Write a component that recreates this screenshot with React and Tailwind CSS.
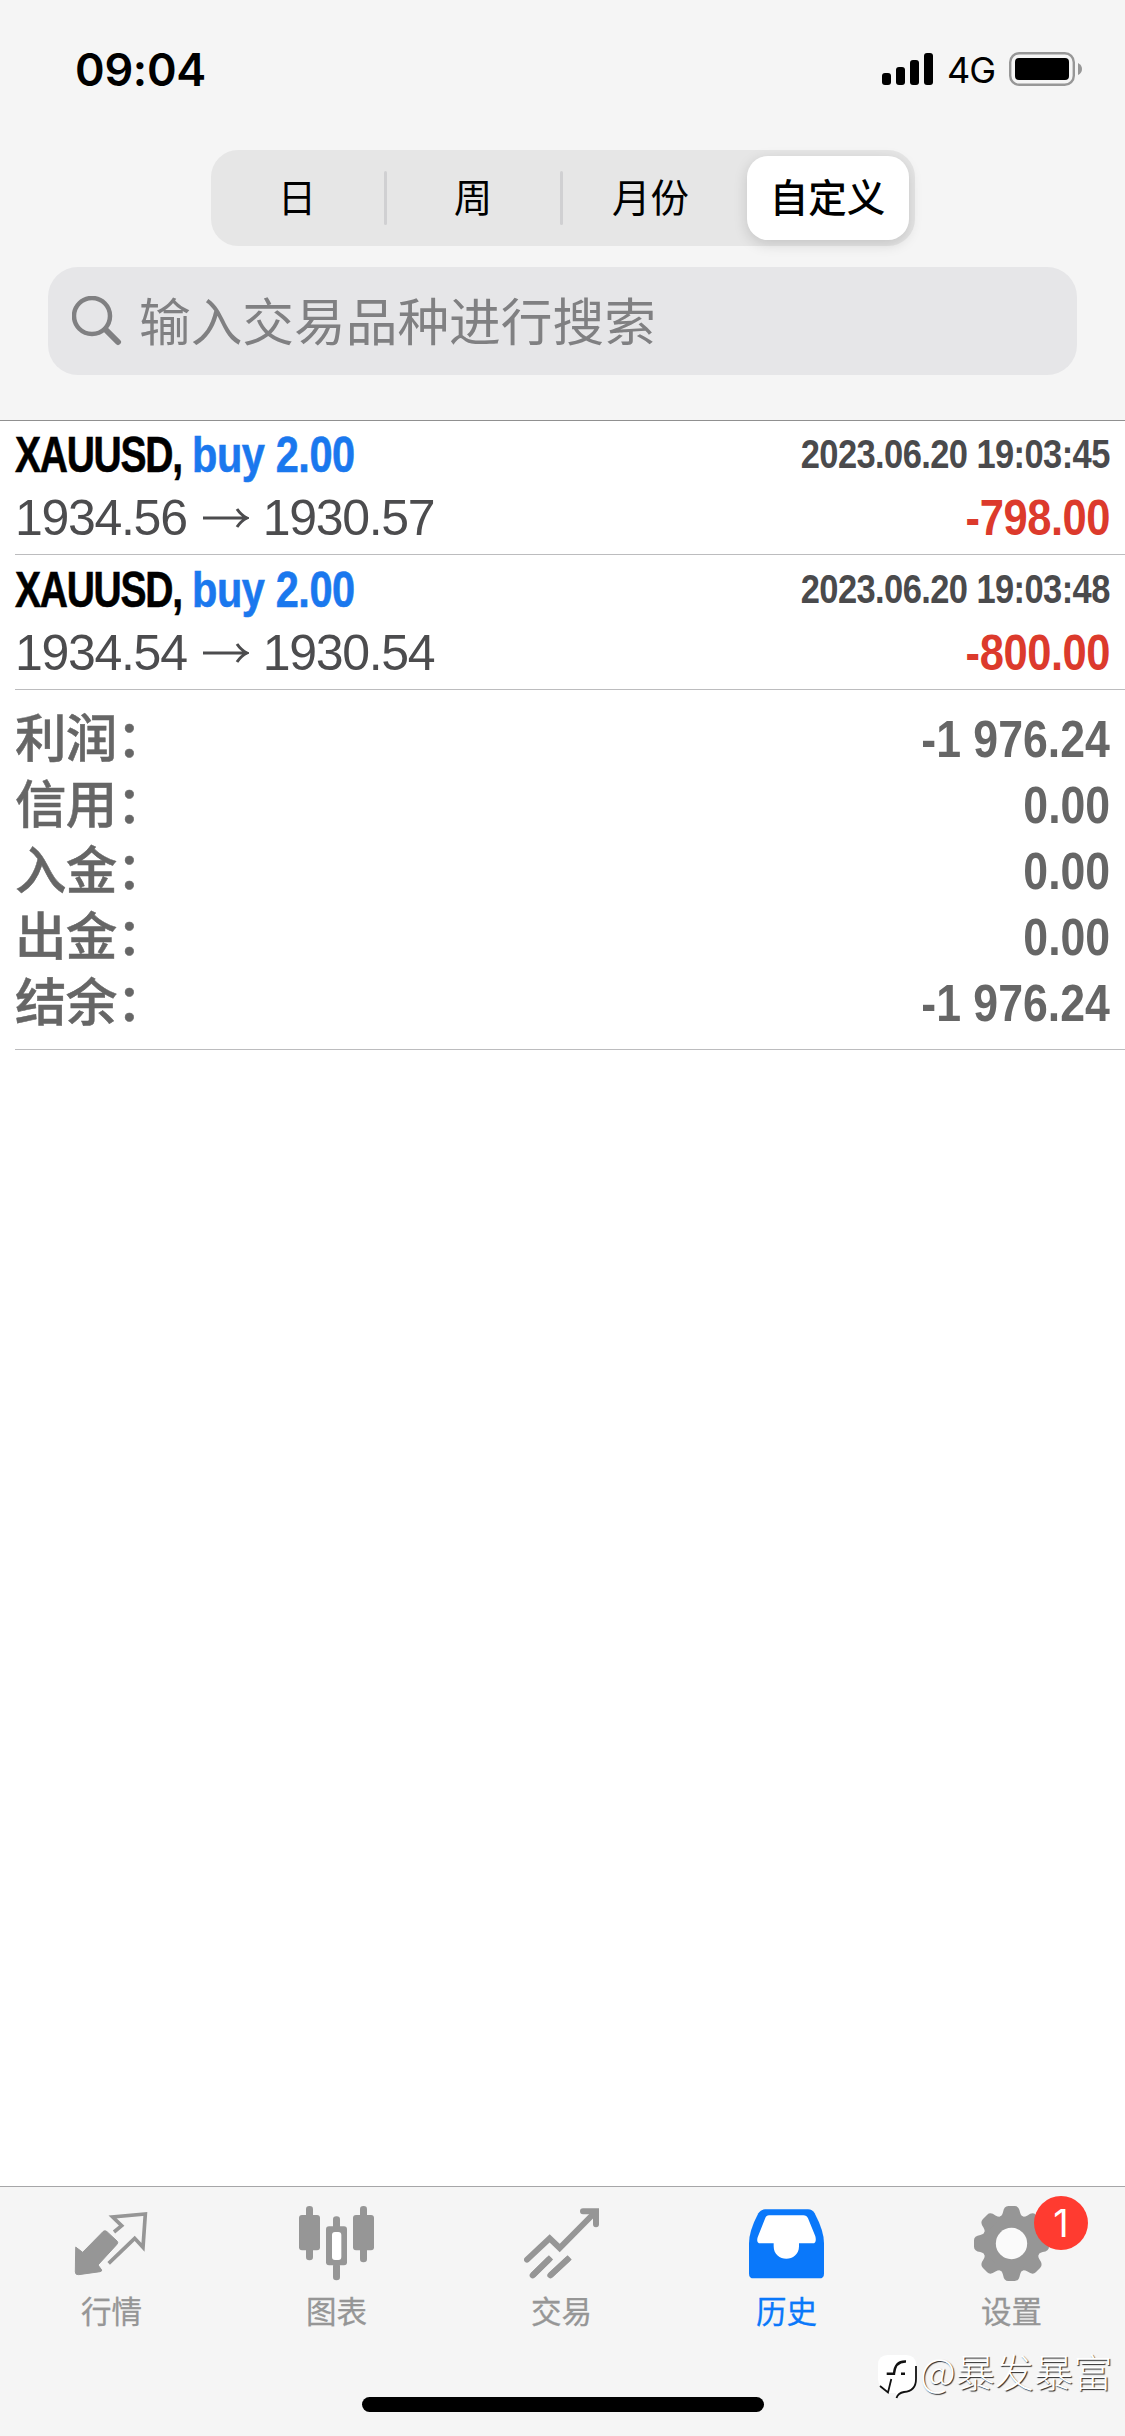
const periods = ['日', '周', '月份', '自定义'];

const deals = [
  { symbol: 'XAUUSD', side: 'buy 2.00', time: '2023.06.20 19:03:45', open: '1934.56', close: '1930.57', profit: '-798.00' },
  { symbol: 'XAUUSD', side: 'buy 2.00', time: '2023.06.20 19:03:48', open: '1934.54', close: '1930.54', profit: '-800.00' }
];

const summary = [
  { label: '利润：', value: '-1 976.24' },
  { label: '信用：', value: '0.00' },
  { label: '入金：', value: '0.00' },
  { label: '出金：', value: '0.00' },
  { label: '结余：', value: '-1 976.24' }
];

const QuotesIcon = () => (
  <svg viewBox="0 0 225 225" className="size-[75px]" strokeLinejoin="round" strokeLinecap="round">
    <path
      d="M6 124 L26 139 L83 81 Q91 70 99 77 L129 105 Q134 110 128 116 L72 177 L83 192 Q84 196 78 197 L14 206 Q4 207 4 199 Z"
      fill="currentColor"
      stroke="currentColor"
      strokeWidth="3"
    />
    <path
      d="M120 78 L143 59 L116 33 L214 24 L207 124 L182 97 L104 172"
      fill="none"
      stroke="currentColor"
      strokeWidth="11"
      strokeLinejoin="miter"
      strokeLinecap="butt"
    />
  </svg>
);

const ChartIcon = () => (
  <svg viewBox="0 0 225 225" className="size-[75px]" fill="currentColor">
    <rect x="21" y="0" width="21" height="163" rx="10" />
    <rect x="0" y="27" width="63" height="106" rx="9" />
    <rect x="183" y="0" width="21" height="169" rx="10" />
    <rect x="162" y="27" width="63" height="106" rx="9" />
    <rect x="102" y="31" width="21" height="40" rx="10" />
    <rect x="102" y="170" width="21" height="53" rx="10" />
    <rect x="81" y="61" width="63" height="117" rx="9" />
    <rect x="99" y="78" width="28" height="84" rx="9" fill="#fff" />
  </svg>
);

const TradeIcon = () => (
  <svg viewBox="0 0 225 225" className="size-[75px]" fill="none" stroke="currentColor" strokeWidth="18" strokeLinecap="round">
    <path d="M9 161 L77 97 L107 126 L211 21" />
    <path d="M177 16 H216 V55" />
    <path d="M26 208 L81 154" strokeLinecap="butt" />
    <path d="M26 208 L74 161" />
    <path d="M79 208 L137 154" strokeLinecap="butt" />
    <path d="M79 208 L130 161" />
  </svg>
);

const HistoryIcon = () => (
  <svg viewBox="0 0 225 225" className="size-[75px]">
    <path
      d="M48 10 H177 Q190 10 197 22 Q225 75 225 112 V203 Q225 217 211 217 H14 Q0 217 0 203 V112 Q0 75 28 22 Q35 10 48 10 Z"
      fill="currentColor"
    />
    <path
      d="M60 28 H163 Q173 28 177 37 L199 91 Q204 112 191 112 H150 V121 C150 171 74 171 74 121 V112 H34 Q21 112 26 94 L48 38 Q52 28 60 28 Z"
      fill="#fff"
    />
  </svg>
);

const teeth = [0, 45, 90, 135, 180, 225, 270, 315];

const SettingsIcon = () => (
  <svg viewBox="0 0 225 225" className="size-[75px]" fill="currentColor">
    <circle cx="112.5" cy="112.5" r="88" />
    {teeth.map((angle) => (
      <path
        key={angle}
        d="M72 36 Q84 32 87 19 Q90 0 103 0 H122 Q135 0 138 19 Q141 32 153 36 Z"
        transform={`rotate(${angle} 112.5 112.5)`}
      />
    ))}
    <circle cx="112.5" cy="112.5" r="47" fill="#fafafa" />
  </svg>
);

const tabs = [
  { label: '行情', Icon: QuotesIcon },
  { label: '图表', Icon: ChartIcon },
  { label: '交易', Icon: TradeIcon },
  { label: '历史', Icon: HistoryIcon, active: true },
  { label: '设置', Icon: SettingsIcon, badge: 1 }
];

const StatusBar = () => (
  <div className="flex h-[150px] items-start justify-between pt-[52px] pr-[42px] pl-[75px]">
    <div className="h-[34px] pt-[1px] font-['Inter'] text-[45px] leading-[34px] font-semibold tracking-[-0.3px]">09:04</div>
    <div className="flex h-[34px] items-center">
      <svg viewBox="0 0 52 34" className="h-[34px] w-[52px]">
        <rect x="0" y="21" width="9" height="12" rx="3" />
        <rect x="14" y="15" width="9" height="18" rx="3" />
        <rect x="28" y="8" width="9" height="25" rx="3" />
        <rect x="42" y="1" width="9" height="32" rx="3" />
      </svg>
      <span className="w-[62px] pt-[2px] pl-[13px] font-['Inter'] text-[36px] leading-[34px] tracking-[-1px]">4G</span>
      <svg viewBox="0 0 74 34" className="ml-[13px] h-[34px] w-[74px]">
        <rect x="1.2" y="1.2" width="63.6" height="31.6" rx="9" fill="none" stroke="#979797" strokeWidth="2.4" />
        <rect x="6" y="6" width="54" height="22" rx="4" />
        <path d="M69 11 Q73 13 73 17 Q73 21 69 23 Z" fill="#979797" />
      </svg>
    </div>
  </div>
);

const PeriodSwitch = () => (
  <div className="mx-auto flex h-[96px] w-[704px] items-center rounded-[27px] bg-[#e6e6e6] pr-[6px] text-[38.5px]">
    {periods.map((period, index) =>
      index === 3 ? (
        <div
          key={period}
          className="ml-auto flex h-[84px] w-[162px] items-center justify-center rounded-[21px] bg-white pt-[2px] font-medium shadow-[0_4px_14px_rgba(0,0,0,0.15)]"
        >
          {period}
        </div>
      ) : (
        <div key={period} className="flex items-center">
          <div className={`w-[173px] pt-[2px] text-center ${index === 2 ? 'pl-[3px]' : ''}`}>{period}</div>
          {index < 2 && <div className="h-[54px] w-[3px] rounded-full bg-[#d0d0d2]" />}
        </div>
      )
    )}
  </div>
);

const DealRow = ({ deal }) => (
  <div className="ml-[15px] h-[135px] border-b border-[#bcbcbe] pt-[2px] pr-[15px] text-[50px] first:h-[134px] first:pt-[1px]">
    <div className="flex h-[66px] items-center justify-between font-bold">
      <div className="flex whitespace-nowrap">
        <span className="w-[177px] origin-left scale-x-[0.78] tracking-[-1.6px] [-webkit-text-stroke:0.6px]">{deal.symbol},</span>
        <span className="origin-left scale-x-[0.83] tracking-[-0.5px] text-[#1a78ee] [-webkit-text-stroke:0.6px]">{deal.side}</span>
      </div>
      <span className="origin-right scale-x-[0.852] pb-[2px] text-[40.5px] tracking-[-0.7px] text-[#4a4a4c]">{deal.time}</span>
    </div>
    <div className="flex h-[60px] items-center justify-between">
      <div className="flex items-center tracking-[-1.3px] text-[#4c4c4e]">
        <span>{deal.open}</span>
        <svg viewBox="0 0 46 20" className="mr-[14px] ml-[16px] h-[20px] w-[46px]" fill="none" stroke="currentColor" strokeWidth="3">
          <path d="M0 10 H44 M34 1 Q38 7 44 10 Q38 13 34 19" />
        </svg>
        <span>{deal.close}</span>
      </div>
      <span className="origin-right scale-x-[0.87] font-bold tracking-[-0.5px] text-[#dc3a2c]">{deal.profit}</span>
    </div>
  </div>
);

const Watermark = () => (
  <div className="absolute top-[2349px] left-[876px] flex items-start text-white">
    <svg viewBox="0 0 44 52" className="h-[52px] w-[44px]" fill="none" stroke="#111" strokeWidth="1.8">
      <path d="M12 6 H30 Q40 6 40 16 V30 Q39 44 22 45 L20 49 V44 H12 Q2 38 2 30 V16 Q2 6 12 6 Z" fill="#fff" stroke="none" />
      <path d="M40 17 V30 Q40 42 28 43 Q22 44 20.5 49 M4 37 L12 43.5 L15.3 30" />
      <path d="M10.7 24.7 H18 Q19 12 30 12.5 M25 24.7 H29" strokeWidth="2.4" />
    </svg>
    <span className="-mt-[1px] font-['Noto_Sans_CJK_SC'] text-[39.2px] leading-[44px] font-light [text-shadow:1px_1px_1px_rgba(0,0,0,0.85)]">@暴发暴富</span>
  </div>
);

const App = () => {
  return (
    <div className="relative flex h-[2436px] w-[1125px] flex-col overflow-hidden bg-white font-['Liberation_Sans','Noto_Sans_CJK_SC',sans-serif] text-black">
      <header className="h-[421px] border-b border-[#909090] bg-[#f5f5f5]">
        <StatusBar />
        <PeriodSwitch />
        <div className="mx-[48px] mt-[21px] flex h-[108px] items-center rounded-[30px] bg-[#e6e6e8] pl-[24px] text-[#808082]">
          <svg viewBox="0 0 50 50" className="size-[50px]" fill="none" stroke="currentColor" strokeLinecap="round">
            <circle cx="20" cy="20" r="18" strokeWidth="4.5" />
            <path d="M33.5 33.5 L46 46" strokeWidth="6" />
          </svg>
          <span className="ml-[17px] pt-[5px] text-[51.7px]">输入交易品种进行搜索</span>
        </div>
      </header>

      <main className="flex-1">
        {deals.map((deal) => (
          <DealRow key={deal.time} deal={deal} />
        ))}
        <div className="ml-[15px] h-[360px] border-b border-[#bcbcbe] pt-[16px] pr-[15px] text-[#666]">
          {summary.map((row) => (
            <div key={row.label} className="flex h-[66px] items-center justify-between">
              <span className="pt-[2px] text-[51.5px] font-medium tracking-[-0.8px] [-webkit-text-stroke:0.5px]">{row.label}</span>
              <span className="origin-right scale-x-[0.85] text-[52.5px] font-bold">{row.value}</span>
            </div>
          ))}
        </div>
      </main>

      <nav className="h-[250px] border-t border-[#a6a6a8] bg-[#f5f5f5]">
        <div className="flex h-[210px] pt-[19px]">
          {tabs.map(({ label, Icon, active, badge }) => (
            <div
              key={label}
              className={`flex w-[225px] flex-col items-center pr-[2px] ${active ? 'text-[#0a78fa]' : 'text-[#969696]'}`}
            >
              <div className="relative">
                <Icon />
                {badge && (
                  <span className="absolute -top-[10px] left-[60px] flex size-[54px] items-center justify-center rounded-full bg-[#ff3b30] font-['Inter'] text-[38px] text-white">
                    {badge}
                  </span>
                )}
              </div>
              <span className="mt-[9px] text-[30.5px] leading-[44px] [-webkit-text-stroke:0.3px]">{label}</span>
            </div>
          ))}
        </div>
        <div className="mx-auto h-[15px] w-[402px] rounded-full bg-black" />
      </nav>

      <Watermark />
    </div>
  );
};

export default App;
